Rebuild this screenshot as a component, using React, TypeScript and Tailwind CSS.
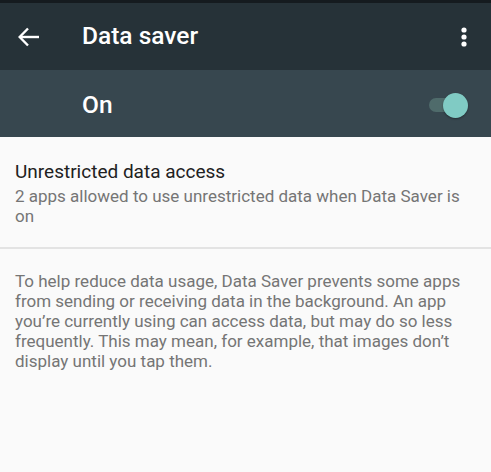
export default function App() {
  return (
    <div className="w-[491px] h-[472px] overflow-hidden bg-[#fafafa] font-['Roboto',sans-serif]">
      <div className="h-[3px] bg-[#151b1f]" />
      <div className="h-[67px] bg-[#263238] flex items-center">
        <div className="w-[82px] pl-[18px]">
          <svg width="22" height="20" viewBox="0 0 22 20" fill="none" stroke="#ffffff" strokeWidth="2.4">
            <path d="M2 10H21" />
            <path d="M10 1.5L1.7 10L10 18.5" />
          </svg>
        </div>
        <div className="flex-1 text-white text-[24.5px] font-medium leading-none">Data saver</div>
        <div className="w-[54px] flex justify-center">
          <svg width="8" height="22" viewBox="0 0 8 22" fill="#ffffff">
            <circle cx="4" cy="4" r="2.6" />
            <circle cx="4" cy="11" r="2.6" />
            <circle cx="4" cy="18" r="2.6" />
          </svg>
        </div>
      </div>
      <div className="h-[67px] bg-[#37474f] flex items-center pl-[82px] pr-[23px] pt-[3px]">
        <div className="flex-1 text-white text-[24.5px] font-medium leading-none">On</div>
        <div className="relative w-[39px] h-[25px] flex items-center">
          <div className="w-[32px] h-[14px] rounded-full bg-[#4f6b6b]" />
          <div className="absolute right-0 top-0 w-[25px] h-[25px] rounded-full bg-[#80cbc4] shadow-[0_1px_2px_rgba(0,0,0,0.35)]" />
        </div>
      </div>
      <div className="px-[15px] pt-[20px] pb-[21px] border-b-2 border-[#e3e3e3]">
        <div className="text-[19px] text-[#212121] leading-[29px]">Unrestricted data access</div>
        <div className="text-[17px] text-[#757575] leading-[20px]">
          2 apps allowed to use unrestricted data when Data Saver is on
        </div>
      </div>
      <div className="pl-[15px] pt-[22px] pr-[25px] text-[17px] text-[#757575] leading-[20px]">
        To help reduce data usage, Data Saver prevents some apps from sending or receiving data in the
        background. An app you’re currently using can access data, but may do so less frequently. This may
        mean, for example, that images don’t display until you tap them.
      </div>
    </div>
  );
}
